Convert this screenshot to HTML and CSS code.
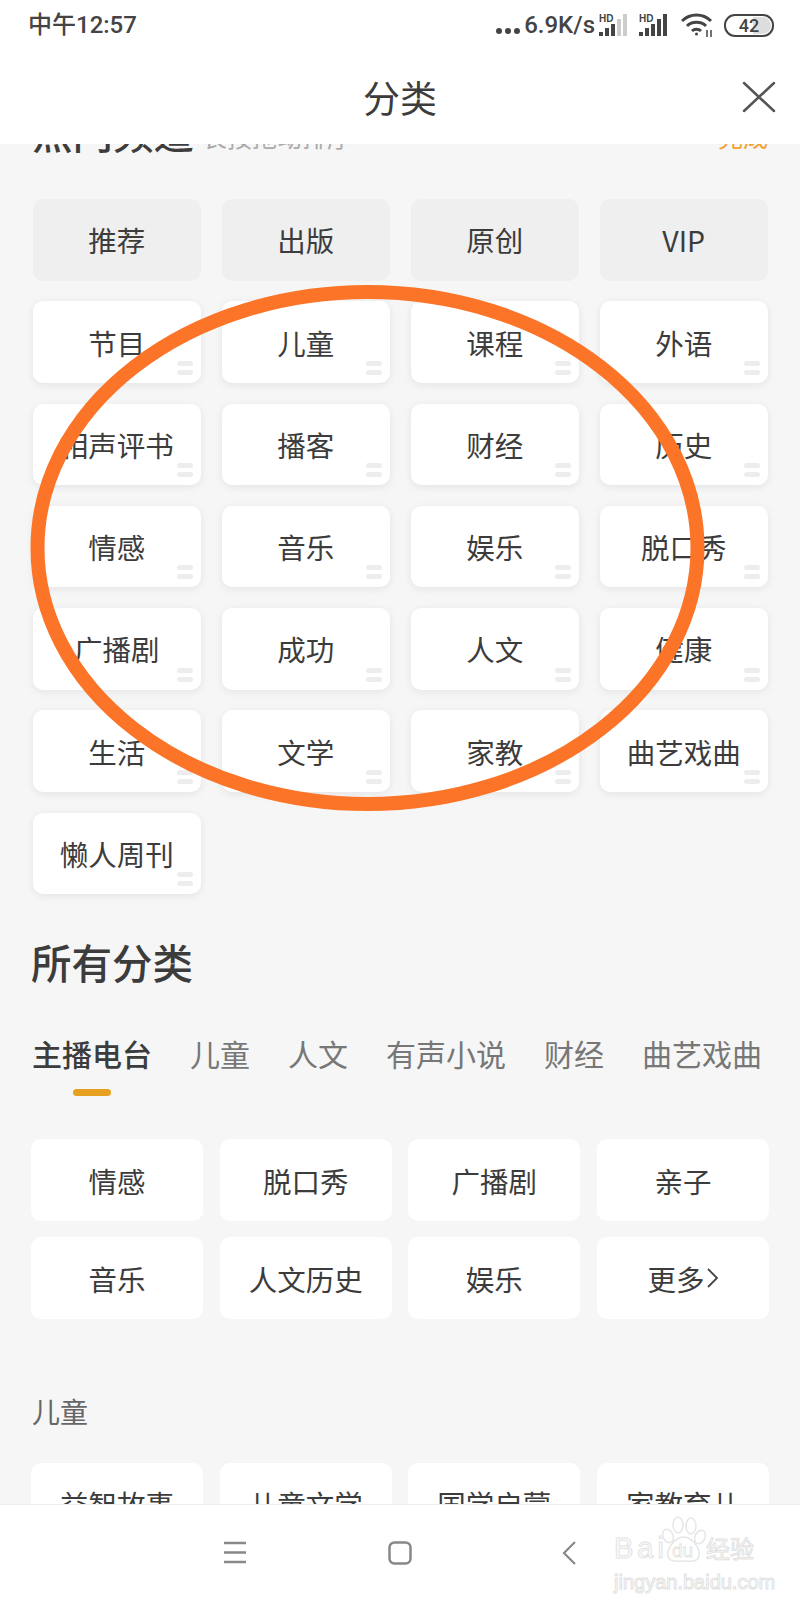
FILE: index.html
```html
<!DOCTYPE html>
<html lang="zh-CN">
<head>
    <meta charset="UTF-8">
    <meta name="viewport" content="width=device-width, initial-scale=1.0">
    <title>分类</title>
    <link rel="stylesheet" href="styles.css">
</head>
<body>
    <div class="phone">
        <div class="status">
            <div class="clock">中午12:57</div>
            <div class="status-right">
                <div class="dots"><i></i><i></i><i></i></div>
                <div class="speed">6.9K/s</div>
                <svg class="signal" width="30" height="24" viewBox="0 0 30 24">
                    <text x="0" y="9" class="hd">HD</text>
                    <rect x="0" y="19" width="4" height="4" fill="#444"/>
                    <rect x="6" y="15" width="4" height="8" fill="#444"/>
                    <rect x="12" y="11" width="4" height="12" fill="#444"/>
                    <rect x="18" y="6" width="4" height="17" fill="#ccc"/>
                    <rect x="24" y="1" width="4" height="22" fill="#ccc"/>
                </svg>
                <svg class="signal" width="30" height="24" viewBox="0 0 30 24">
                    <text x="0" y="9" class="hd">HD</text>
                    <rect x="0" y="19" width="4" height="4" fill="#444"/>
                    <rect x="6" y="15" width="4" height="8" fill="#444"/>
                    <rect x="12" y="11" width="4" height="12" fill="#444"/>
                    <rect x="18" y="6" width="4" height="17" fill="#444"/>
                    <rect x="24" y="1" width="4" height="22" fill="#444"/>
                </svg>
                <svg class="wifi" width="32" height="25" viewBox="0 0 32 25" fill="none" stroke="#444" stroke-width="3">
                    <path d="M1 8C9 0 22 0 30 8"/>
                    <path d="M6 13C11 8 20 8 25 13"/>
                    <path d="M11 18C13.500 15.500 17.500 15.500 20 18"/>
                    <circle cx="15.500" cy="21" r="1.500" fill="#444" stroke="none"/>
                    <path d="M26 17V24M30 17V24" stroke-width="1.500"/>
                </svg>
                <div class="battery"><div class="battery-fill"></div><span>42</span></div>
            </div>
        </div>

        <div class="titlebar">
            <div></div>
            <div class="title">分类</div>
            <svg class="close" width="34" height="32" viewBox="0 0 34 32" fill="none" stroke="#555" stroke-width="2.500" stroke-linecap="round">
                <path d="M2 2L32 30M32 2L2 30"/>
            </svg>
        </div>

        <div class="scroll">
            <div class="hot-head">
                <div class="heading">热门频道</div>
                <div class="hint">长按拖动排序</div>
                <div class="done">完成</div>
            </div>

            <div class="hot-grid">
                <div class="chip fixed">推荐</div>
                <div class="chip fixed">出版</div>
                <div class="chip fixed">原创</div>
                <div class="chip fixed">VIP</div>
                <div class="chip">节目<div class="handle"><i></i><i></i></div></div>
                <div class="chip">儿童<div class="handle"><i></i><i></i></div></div>
                <div class="chip">课程<div class="handle"><i></i><i></i></div></div>
                <div class="chip">外语<div class="handle"><i></i><i></i></div></div>
                <div class="chip">相声评书<div class="handle"><i></i><i></i></div></div>
                <div class="chip">播客<div class="handle"><i></i><i></i></div></div>
                <div class="chip">财经<div class="handle"><i></i><i></i></div></div>
                <div class="chip">历史<div class="handle"><i></i><i></i></div></div>
                <div class="chip">情感<div class="handle"><i></i><i></i></div></div>
                <div class="chip">音乐<div class="handle"><i></i><i></i></div></div>
                <div class="chip">娱乐<div class="handle"><i></i><i></i></div></div>
                <div class="chip">脱口秀<div class="handle"><i></i><i></i></div></div>
                <div class="chip">广播剧<div class="handle"><i></i><i></i></div></div>
                <div class="chip">成功<div class="handle"><i></i><i></i></div></div>
                <div class="chip">人文<div class="handle"><i></i><i></i></div></div>
                <div class="chip">健康<div class="handle"><i></i><i></i></div></div>
                <div class="chip">生活<div class="handle"><i></i><i></i></div></div>
                <div class="chip">文学<div class="handle"><i></i><i></i></div></div>
                <div class="chip">家教<div class="handle"><i></i><i></i></div></div>
                <div class="chip">曲艺戏曲<div class="handle"><i></i><i></i></div></div>
                <div class="chip">懒人周刊<div class="handle"><i></i><i></i></div></div>
            </div>

            <div class="heading all-heading">所有分类</div>

            <div class="tabs">
                <div class="tab active">主播电台<div class="tab-line"></div></div>
                <div class="tab">儿童</div>
                <div class="tab">人文</div>
                <div class="tab">有声小说</div>
                <div class="tab">财经</div>
                <div class="tab">曲艺戏曲</div>
            </div>

            <div class="all-grid">
                <div class="cell">情感</div>
                <div class="cell">脱口秀</div>
                <div class="cell">广播剧</div>
                <div class="cell">亲子</div>
                <div class="cell">音乐</div>
                <div class="cell">人文历史</div>
                <div class="cell">娱乐</div>
                <div class="cell">更多<svg class="more" width="13" height="22" viewBox="0 0 13 22" fill="none" stroke="#444" stroke-width="1.800"><path d="M2 2L11 11L2 20"/></svg></div>
            </div>

            <div class="label">儿童</div>

            <div class="all-grid">
                <div class="cell">益智故事</div>
                <div class="cell">儿童文学</div>
                <div class="cell">国学启蒙</div>
                <div class="cell">家教育儿</div>
            </div>
        </div>

        <div class="navbar">
            <svg width="22" height="23" viewBox="0 0 22 23" stroke="#888" stroke-width="2.500">
                <path d="M0 2H22M0 11.500H22M0 21H22"/>
            </svg>
            <svg width="24" height="24" viewBox="0 0 24 24" fill="none" stroke="#888" stroke-width="2.500">
                <rect x="1.500" y="1.500" width="21" height="21" rx="5"/>
            </svg>
            <svg class="nav-back" width="14" height="24" viewBox="0 0 14 24" fill="none" stroke="#888" stroke-width="2.200">
                <path d="M13 1L2 12L13 23"/>
            </svg>

            <div class="watermark">
                <div class="wm-top">
                    <span class="wm-bai">Bai</span>
                    <svg class="paw" width="50" height="50" viewBox="0 0 50 50" fill="#fff" stroke="#e6e6e6" stroke-width="1.500">
                        <ellipse cx="8" cy="21" rx="5" ry="7" transform="rotate(-25 8 21)"/>
                        <ellipse cx="18" cy="10" rx="5" ry="8"/>
                        <ellipse cx="31" cy="11" rx="5" ry="8"/>
                        <ellipse cx="40" cy="22" rx="5" ry="7" transform="rotate(25 40 22)"/>
                        <path d="M24 22C32 22 41 34 39 41C37 48 30 46 24 46C17 46 10 48 8 41C6 34 15 22 24 22Z"/>
                        <text x="12" y="42" class="wm-du">du</text>
                    </svg>
                    <span class="wm-cn">经验</span>
                </div>
                <div class="wm-url">jingyan.baidu.com</div>
            </div>
        </div>

        <svg class="circle" width="800" height="1600" viewBox="0 0 800 1600" fill="none">
            <ellipse cx="367.500" cy="548" rx="330" ry="256" stroke="#fb7428" stroke-width="14"/>
        </svg>
    </div>
</body>
</html>
```

FILE: styles.css
```css
body {
    margin: 0;
    font-family: "Noto Sans CJK SC", "Noto Sans", sans-serif;
    color: #3c3c3c;
}
.phone {
    position: relative;
    width: 800px;
    height: 1600px;
    display: flex;
    flex-direction: column;
    background-color: #f6f6f6;
    overflow: hidden;
}

/* status bar */
.status {
    height: 50px;
    display: flex;
    justify-content: space-between;
    align-items: center;
    padding: 0 26px 0 28px;
    background-color: #fff;
    color: #444;
}
.clock, .speed {
    font-family: Roboto, "Noto Sans CJK SC", sans-serif;
    font-size: 24px;
    font-weight: 500;
    line-height: 1;
}
.status-right {
    display: flex;
    align-items: center;
}
.dots {
    display: flex;
    gap: 3px;
    margin-top: 12px;
}
.dots i {
    width: 6px;
    height: 6px;
    border-radius: 50%;
    background-color: #444;
}
.speed {
    margin-left: 4px;
    margin-right: 4px;
}
.signal {
    margin-right: 10px;
}
.hd {
    font-family: "Liberation Sans", sans-serif;
    font-size: 10px;
    font-weight: 700;
    fill: #444;
}
.wifi {
    margin-left: 2px;
    margin-right: 11px;
}
.battery {
    position: relative;
    width: 46px;
    height: 19px;
    border: 2px solid #444;
    border-radius: 11px;
    display: flex;
    justify-content: center;
    align-items: center;
    font-family: Roboto, sans-serif;
    font-size: 18px;
    font-weight: 500;
    overflow: hidden;
}
.battery span {
    position: relative;
}
.battery-fill {
    position: absolute;
    top: 1px;
    right: 1px;
    bottom: 1px;
    width: 18px;
    border-radius: 0 9px 9px 0;
    background-color: #ddd;
}

/* title bar */
.titlebar {
    height: 94px;
    box-sizing: border-box;
    padding: 0 24px 0 24px;
    display: grid;
    grid-template-columns: 1fr auto 1fr;
    align-items: center;
    background-color: #fff;
    position: relative;
    z-index: 1;
}
.title {
    font-size: 37px;
    line-height: 44px;
}
.close {
    justify-self: end;
}

/* scrolling part */
.scroll {
    flex: 1;
    min-height: 0;
    overflow: hidden;
}
.hot-head {
    margin-top: -36px;
    padding: 0 32px;
    display: flex;
    align-items: flex-end;
}
.heading {
    font-size: 40.500px;
    line-height: 48px;
    font-weight: 500;
}
.hint {
    margin-left: 8px;
    font-size: 25px;
    line-height: 40px;
    color: #aaa;
}
.done {
    margin-left: auto;
    font-size: 25px;
    line-height: 40px;
    color: #f5a030;
}
.hot-grid {
    margin-top: 43px;
    padding: 0 32.500px;
    display: grid;
    grid-template-columns: repeat(4, 168.500px);
    grid-auto-rows: 81.500px;
    gap: 20.800px 20.500px;
}
.chip {
    position: relative;
    display: flex;
    justify-content: center;
    align-items: center;
    font-size: 28.500px;
    border-radius: 10px;
    background-color: #fff;
    box-shadow: 0 2px 8px rgba(0, 0, 0, 0.08);
}
.chip.fixed {
    background-color: #efefef;
    box-shadow: none;
}
.handle {
    position: absolute;
    right: 8px;
    bottom: 8px;
    display: flex;
    flex-direction: column;
    gap: 4px;
}
.handle i {
    display: block;
    width: 16px;
    height: 5px;
    border-radius: 3px;
    background-color: #ededed;
}
.all-heading {
    margin-top: 44px;
    padding: 0 31px;
}
.tabs {
    margin-top: 47px;
    padding: 0 32px;
    display: flex;
    align-items: flex-start;
    gap: 38px;
}
.tab {
    display: flex;
    flex-direction: column;
    align-items: center;
    font-size: 30px;
    line-height: 40px;
    color: #777;
    white-space: nowrap;
}
.tab.active {
    color: #3c3c3c;
    font-weight: 500;
}
.tab-line {
    width: 38px;
    height: 7px;
    margin-top: 16px;
    border-radius: 4px;
    background-color: #e8a020;
}
.all-grid {
    margin-top: 43px;
    padding: 0 31px;
    display: grid;
    grid-template-columns: repeat(4, 172px);
    grid-auto-rows: 81.500px;
    gap: 16.500px 16.700px;
}
.cell {
    display: flex;
    justify-content: center;
    align-items: center;
    font-size: 28.500px;
    border-radius: 10px;
    background-color: #fff;
}
.more {
    margin-left: 1px;
}
.label {
    margin-top: 72px;
    padding: 0 32px;
    font-size: 28px;
    line-height: 40px;
    color: #666;
}
.label + .all-grid {
    margin-top: 32px;
}

/* bottom bar */
.navbar {
    position: relative;
    height: 96px;
    box-sizing: border-box;
    border-top: 1px solid #eee;
    display: flex;
    justify-content: center;
    align-items: center;
    gap: 142px;
    background-color: #fff;
}
.nav-back {
    margin-left: 8px;
}
.watermark {
    position: absolute;
    left: 614px;
    top: 10px;
    width: 145px;
    color: #fff;
    -webkit-text-stroke: 1px #e2e2e2;
}
.wm-top {
    display: flex;
    align-items: flex-end;
    height: 50px;
}
.wm-bai {
    font-family: "Liberation Sans", sans-serif;
    font-size: 29px;
    letter-spacing: 4px;
    line-height: 34px;
}
.paw {
    margin-left: -8px;
    margin-right: -4px;
    -webkit-text-stroke: 0;
}
.wm-du {
    font-family: "Liberation Sans", sans-serif;
    font-size: 19px;
    fill: #fff;
    stroke: #e2e2e2;
    stroke-width: 0.800;
}
.wm-cn {
    font-size: 24px;
    line-height: 34px;
}
.wm-url {
    margin-top: 6px;
    font-family: "Liberation Sans", sans-serif;
    font-size: 20px;
    line-height: 22px;
    white-space: nowrap;
}

/* hand-drawn mark on top of the screenshot */
.circle {
    position: absolute;
    left: 0;
    top: 0;
    z-index: 2;
}
```
